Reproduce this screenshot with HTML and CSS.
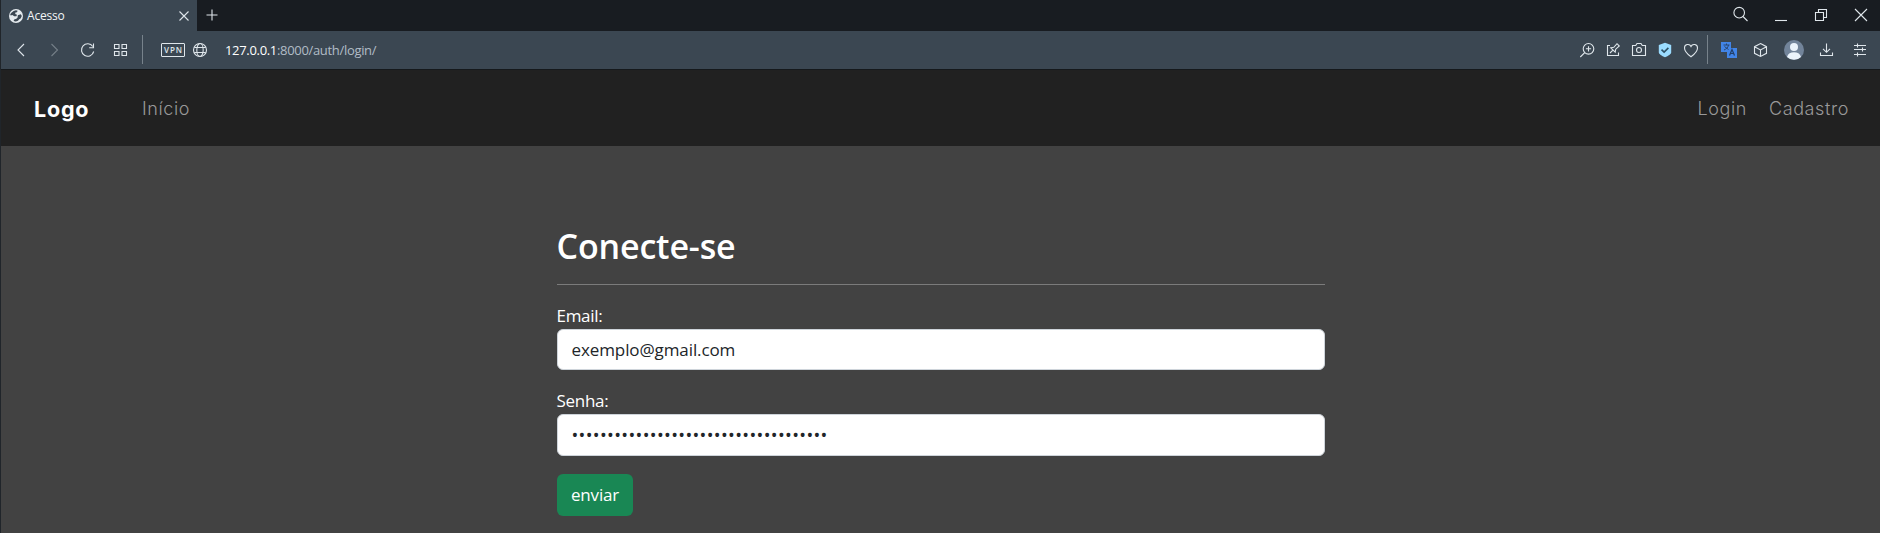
FILE: index.html
```html
<!DOCTYPE html>
<html lang="pt-BR">
<head>
<meta charset="utf-8">
<title>Acesso</title>
<link rel="stylesheet" href="styles.css">
</head>
<body>
<div class="window">
  <header class="tabs">
    <div class="tab">
      <svg class="favicon" viewBox="0 0 14 14"><circle cx="7" cy="7" r="7" fill="#e4eaee"/><path d="M4.600 2 7 1.200 8.600 1.800 8 3.200 6.400 3.600 6.200 5 8 5.800 7.400 7.200 5.200 7.200 3.400 6 1.600 6.600 1.200 5.200 2.400 3.800z M8.800 6.200 11.800 5.200 12.800 7 11.600 9.400 10.200 10.200 9 11.800 6.800 12.600 4.600 12 5.200 10.400 7.400 9.800 8.600 8.400z" fill="#3b4752"/></svg>
      <span class="tab-title">Acesso</span>
      <svg class="tab-close line" viewBox="0 0 10 10"><path d="m.5.5 9 9m0-9-9 9"/></svg>
    </div>
    <svg class="new-tab line" viewBox="0 0 12 12"><path d="M6 .5v11M.5 6h11"/></svg>
    <div class="controls">
      <svg class="icon line" viewBox="0 0 20 20"><circle cx="8.200" cy="7.700" r="5.300"/><path d="m12 11.500 4.500 4.500"/></svg>
      <svg class="icon line" viewBox="0 0 20 20"><path d="M4 15.500h12"/></svg>
      <svg class="icon line" viewBox="0 0 20 20"><path d="M4.500 7.500h8v8h-8z M7.500 7.500V4.500h8v8h-3"/></svg>
      <svg class="icon line" viewBox="0 0 20 20"><path d="m4 4 12 12m0-12-12 12"/></svg>
    </div>
  </header>
  <div class="toolbar">
    <svg class="icon line" viewBox="0 0 20 20"><path d="m14 4-6 6 6 6"/></svg>
    <svg class="icon line forward" viewBox="0 0 20 20"><path d="m7.500 4 6 6-6 6"/></svg>
    <svg class="icon line reload" viewBox="0 0 20 20"><path d="M15.800 6.500A6.200 6.200 0 1 0 16.700 11.500M16.500 3.500v4.200h-4.300"/></svg>
    <svg class="icon line grid" viewBox="0 0 20 20"><path d="M4.500 4.500h4.500v4h-4.500zM12 4.500h4.500v4h-4.500zM4.500 11.500h4.500v4h-4.500zM12 11.500h4.500v4h-4.500z"/></svg>
    <i class="divider left"></i>
    <span class="vpn">VPN</span>
    <svg class="icon line globe" viewBox="0 0 20 20"><circle cx="10" cy="10" r="6.500"/><ellipse cx="10" cy="10" rx="3.200" ry="6.500"/><path d="M4.300 7.500h11.400M4.300 12.500h11.400"/></svg>
    <span class="url"><b>127.0.0.1</b>:8000/auth/login/</span>
    <div class="actions">
      <svg class="icon line" viewBox="0 0 20 20"><circle cx="11.500" cy="8.800" r="5.300"/><path d="M11.500 6.200v5.200M8.900 8.800h5.200M7.700 12.600 3.300 17"/></svg>
      <svg class="icon line" viewBox="0 0 20 20"><path d="M7 5.500H4.500v10h11V12.500M7 13l3.200-3.200M7.800 7.800l4.400 4.400 .5-3 3.600-3.200-2.300-2.300-3.200 3.600z"/></svg>
      <svg class="icon line" viewBox="0 0 20 20"><path d="M3.500 5.500h3.200l1.300-2h4l1.300 2h3.200v10h-13z"/><circle cx="10" cy="10" r="2.500"/></svg>
      <svg class="icon" viewBox="0 0 20 20"><path d="M10 2.800 16.200 5v7.500c0 1.500-3 3.500-6.200 4.700-3.200-1.200-6.200-3.200-6.200-4.700V5z" fill="#9bdcff"/><path d="m6.500 9.600 2.600 2.500 4.300-4.200" fill="none" stroke="#2d5166" stroke-width="1.600"/></svg>
      <svg class="icon line" viewBox="0 0 20 20"><path d="M10 16.800C7 14.600 3.500 11.600 3.500 8a3.400 3.400 0 0 1 6.500-1.500A3.400 3.400 0 0 1 16.500 8c0 3.600-3.500 6.600-6.500 8.800z"/></svg>
    </div>
    <i class="divider"></i>
    <svg class="icon translate" viewBox="0 0 20 20"><path d="M2 2h10v10H2zM8 8h10v10H8z" fill="#4285e8"/><path d="M4.500 5h6M7.500 3.500V5M9.500 5c-.5 3-2.500 4-4.500 5M5.500 6.500 9.500 9.500M4.500 12.500c0 2 1 2.500 3 2.500" stroke="#29466f" fill="none"/><path d="m10.500 15.500 2.500-6 2.500 6m-4.100-2h3.200" stroke="#223f68" stroke-width="1.200" fill="none"/></svg>
    <svg class="icon line cube" viewBox="0 0 20 20"><path d="m10.500 3.500 6 3.200v6.600l-6 3.200-6-3.200V6.700zM4.500 6.700l6 3.200 6-3.200M10.500 9.900v6.600"/></svg>
    <svg class="icon avatar" viewBox="0 0 20 20"><circle cx="10" cy="10" r="10" fill="#72849a"/><circle cx="10" cy="7" r="4" fill="#eaf3fb"/><path d="M3 17c1-3.300 3.500-4.700 7-4.700s6 1.400 7 4.700a10 10 0 0 1-14 0z" fill="#eaf3fb"/></svg>
    <svg class="icon line download" viewBox="0 0 20 20"><path d="M10.500 3.500v8.500M7 8.800l3.500 3.500L14 8.800M4.500 12.500v3h12v-3"/></svg>
    <svg class="icon line sliders" viewBox="0 0 20 20"><path d="M4 5.500h12M4 9.500h12M4 14.500h12M7.500 3.500v4M12.500 7.500v4M7.500 12.500v4"/></svg>
  </div>
  <nav class="navbar">
    <a class="brand">Logo</a>
    <a class="link home">Início</a>
    <a class="link login">Login</a>
    <a class="link signup">Cadastro</a>
  </nav>
  <main class="page">
    <form class="form">
      <h1>Conecte-se</h1>
      <hr>
      <label for="email">Email:</label>
      <input id="email" class="email" type="text" value="exemplo@gmail.com">
      <label>Senha:</label>
      <div class="password">••••••••••••••••••••••••••••••••••••</div>
      <button type="button">enviar</button>
    </form>
  </main>
</div>
</body>
</html>
```
FILE: styles.css
```css
* { box-sizing: border-box; }
body { margin: 0; background: #424242; font-family: "Open Sans", "Noto Sans", sans-serif; }
.window { height: 533px; overflow: hidden; border-left: 1px solid #20252a; }
svg { display: block; flex: none; }
.icon { width: 20px; height: 20px; }
.line { fill: none; stroke: #dfe6eb; stroke-width: 1.1; }

.tabs { display: flex; height: 31px; background: #181c21; }
.tab { display: flex; align-items: center; width: 196px; padding: 0 8px 0 8px; background: #3b4752; }
.favicon { width: 14px; height: 14px; }
.tab-title { margin-left: 4px; color: #f2f5f7; font-size: 12px; letter-spacing: -0.2px; line-height: 31px; }
.tab-close { width: 10px; height: 10px; margin-left: auto; }
.new-tab { width: 12px; height: 12px; margin: 9px 0 0 9px; }
.controls { display: flex; gap: 20px; margin-left: auto; padding: 5px 9px 0 0; }

.toolbar { display: flex; align-items: center; height: 39px; padding: 0 10px 1px 9px; background: #3b4752; border-bottom: 1px solid #15191c; }
.forward { margin-left: 14px; opacity: .35; }
.reload { margin-left: 13px; }
.grid { margin-left: 13px; }
.divider { flex: none; width: 1px; height: 29px; background: #77828b; }
.divider.left { margin-left: 12px; }
.vpn { width: 24px; height: 14px; margin-left: 18px; border: 1px solid #dfe6eb; border-radius: 1px; color: #dfe6eb; font: 600 8px/12px "Open Sans", sans-serif; letter-spacing: 1px; text-align: center; text-indent: 1px; }
.globe { margin-left: 5px; }
.url { margin-left: 15px; color: #b1bcc6; font-size: 13px; letter-spacing: -0.32px; line-height: 20px; white-space: nowrap; }
.url b { color: #fff; font-weight: 500; }
.actions { display: flex; gap: 6px; margin: 0 6px 0 auto; }
.translate { margin-left: 11px; }
.cube { margin-left: 11px; }
.avatar { margin-left: 14px; }
.download { margin-left: 12px; }
.sliders { margin-left: 14px; }

.navbar { display: flex; align-items: center; height: 76px; padding: 1px 31px 0 33px; background: #212121; }
.brand { width: 108px; color: #fff; font: 700 21.5px/30px Inter, sans-serif; letter-spacing: 0.8px; }
.link { color: #999; font: 300 18px/30px Inter, sans-serif; letter-spacing: 0.6px; }
.signup { margin-left: 22px; }
.login { margin-left: auto; }

.page { display: flex; justify-content: center; padding-top: 78px; }
.form { display: flex; flex-direction: column; align-items: flex-start; width: 768px; color: #fff; }
h1 { margin: 0; font-size: 34px; font-weight: 600; line-height: 44px; letter-spacing: -0.15px; }
hr { width: 100%; height: 1px; margin: 16px 0 18px; border: 0; background: #7b7b7b; }
label { font-size: 17px; line-height: 26px; letter-spacing: -0.3px; }
.email, .password { width: 100%; border: 1px solid #ced4da; border-radius: 6px; background: #fff; color: #212529; padding: 0 14px; }
.email { height: 41px; margin-bottom: 18px; font: 400 17px/39px "Open Sans", sans-serif; letter-spacing: -0.1px; }
.password { height: 42px; font: 400 18px/41px "Open Sans", sans-serif; letter-spacing: 0.35px; }
button { height: 42px; width: 76px; margin-top: 18px; padding: 0 0 0 1px; border: 0; border-radius: 6px; background: #198754; color: #fff; font: 400 17px/40px "Open Sans", sans-serif; letter-spacing: -0.2px; }
```
